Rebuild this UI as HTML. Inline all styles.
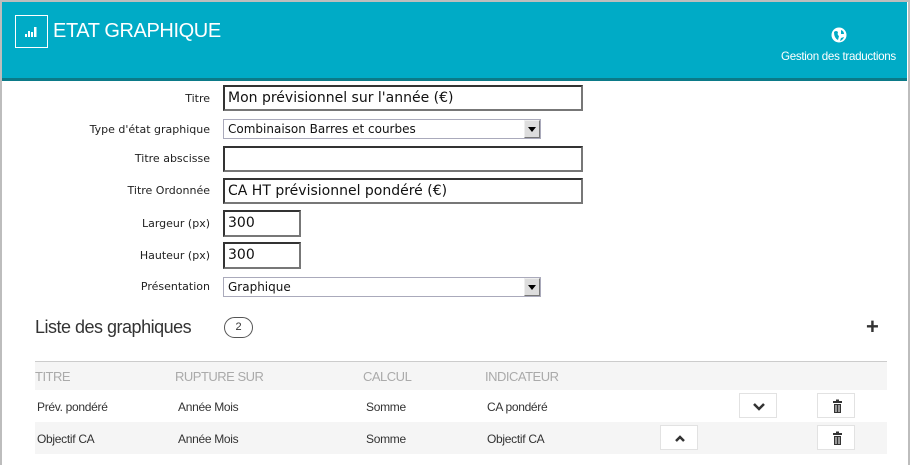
<!DOCTYPE html>
<html><head><meta charset="utf-8"><style>
*{box-sizing:border-box;margin:0;padding:0}
body{width:910px;height:465px;overflow:hidden;background:#fff;font-family:"DejaVu Sans",sans-serif;position:relative}
.frame{position:absolute;left:0;top:0;width:910px;height:465px;border:2px solid #bdbdbd;border-bottom:none}
.hdr{position:absolute;left:2px;top:2px;width:905px;height:76px;background:#00abc6}
.stripe{position:absolute;left:2px;top:78px;width:905px;height:3px;background:#0b7a88}
.logo{position:absolute;left:15px;top:15px;width:33px;height:33px;border:1.5px solid #fff}
.title{position:absolute;left:53px;top:20px;color:#fff;font-family:"Liberation Sans",sans-serif;font-size:20px;letter-spacing:-0.4px}
.gt{position:absolute;left:781px;top:50px;color:#fff;font-family:"Liberation Sans",sans-serif;font-size:11.6px;letter-spacing:-0.3px}
.lbl{position:absolute;right:700px;font-size:11px;color:#222;text-align:right;white-space:nowrap}
.inp{position:absolute;left:223px;border:2px solid #333;border-right-color:#777;border-bottom-color:#777;font-size:14px;padding:1px 3px;color:#111;line-height:20px}
.sel{position:absolute;left:223px;width:318px;height:20px;border:1px solid #aab;background:#fff;font-size:12px;padding:0 4px;line-height:18px;color:#111}
.sel .b{position:absolute;right:0;top:0;width:16px;height:18px;background:#ddd;border:1px solid #777;border-top-color:#eee;border-left-color:#eee}
.sel .b:after{content:"";position:absolute;left:3px;top:6px;border-left:4px solid transparent;border-right:4px solid transparent;border-top:5px solid #000}
.h2{position:absolute;left:35px;top:317px;font-family:"Liberation Sans",sans-serif;font-size:18px;color:#333;letter-spacing:-0.5px}
.badge{position:absolute;left:224px;top:317px;width:29px;height:21px;border:1.5px solid #555;border-radius:11px;font-family:"Liberation Sans",sans-serif;font-size:11px;text-align:center;line-height:18px;color:#333}
.plus{position:absolute;left:866px;top:314px;font-family:"Liberation Sans",sans-serif;font-size:22px;font-weight:bold;color:#333}
.row{position:absolute;left:35px;width:852px}
.t{position:absolute;font-family:"Liberation Sans",sans-serif;font-size:12px;color:#333;letter-spacing:-0.3px}
.th{font-size:13px;color:#aaa;letter-spacing:-0.5px}
.btn{position:absolute;width:38px;height:25px;border:1px solid #e2e2e2;background:#fff}
</style></head><body>
<div class="frame"></div>
<div class="hdr"></div><div class="stripe"></div>
<div class="logo"><svg width="30" height="30" viewBox="0 0 30 30"><g fill="#fff"><rect x="9" y="18" width="2" height="3"/><rect x="12" y="15" width="2" height="6"/><rect x="15" y="16" width="2" height="5"/><rect x="18" y="11" width="2.5" height="10"/></g></svg></div>
<div class="title">ETAT GRAPHIQUE</div>
<svg style="position:absolute;left:831px;top:27px" width="16" height="16" viewBox="0 0 16 16"><circle cx="8" cy="8" r="7.5" fill="#fff"/><path d="M3 5 Q5 3 7 5 Q6 8 8 9 L7 13 Q3 11 3 5Z M10 3 Q13 4 13 7 L10 7Z M10 11 L13 10 Q12 13 9 14Z" fill="#00abc6"/></svg>
<div class="gt">Gestion des traductions</div>

<div class="lbl" style="top:92px">Titre</div>
<div class="inp" style="top:85px;width:360px;height:26px">Mon prévisionnel sur l'année (€)</div>
<div class="lbl" style="top:123px">Type d'état graphique</div>
<div class="sel" style="top:119px">Combinaison Barres et courbes<div class="b"></div></div>
<div class="lbl" style="top:152px">Titre abscisse</div>
<div class="inp" style="top:146px;width:360px;height:26px"></div>
<div class="lbl" style="top:184px">Titre Ordonnée</div>
<div class="inp" style="top:178px;width:360px;height:26px">CA HT prévisionnel pondéré (€)</div>
<div class="lbl" style="top:217px">Largeur (px)</div>
<div class="inp" style="top:210px;width:78px;height:27px">300</div>
<div class="lbl" style="top:249px">Hauteur (px)</div>
<div class="inp" style="top:242px;width:78px;height:27px">300</div>
<div class="lbl" style="top:280px">Présentation</div>
<div class="sel" style="top:277px">Graphique<div class="b"></div></div>

<div class="h2">Liste des graphiques</div>
<div class="badge">2</div>
<div class="plus">+</div>

<div class="row" style="top:361px;height:29px;background:#f5f5f5;border-top:1px solid #ccc">
<div class="t th" style="left:0;top:7px">TITRE</div>
<div class="t th" style="left:140px;top:7px">RUPTURE SUR</div>
<div class="t th" style="left:328px;top:7px">CALCUL</div>
<div class="t th" style="left:450px;top:7px">INDICATEUR</div>
</div>
<div class="row" style="top:390px;height:32px;background:#fff">
<div class="t" style="left:2px;top:10px">Prév. pondéré</div>
<div class="t" style="left:143px;top:10px">Année Mois</div>
<div class="t" style="left:331px;top:10px">Somme</div>
<div class="t" style="left:452px;top:10px">CA pondéré</div>
<div class="btn" style="left:704px;top:3px"><svg width="38" height="25"><path d="M14 10 L19 15 L24 10" stroke="#333" stroke-width="2.5" fill="none"/></svg></div>
<div class="btn" style="left:782px;top:3px"><svg width="38" height="25"><g fill="#333"><rect x="15" y="7" width="9" height="2"/><rect x="18" y="5.5" width="3" height="2"/><rect x="16" y="10" width="7" height="9"/></g><g fill="#fff"><rect x="17.5" y="11" width="1" height="7"/><rect x="20.5" y="11" width="1" height="7"/></g></svg></div>
</div>
<div class="row" style="top:422px;height:32px;background:#f5f5f5">
<div class="t" style="left:2px;top:10px">Objectif CA</div>
<div class="t" style="left:143px;top:10px">Année Mois</div>
<div class="t" style="left:331px;top:10px">Somme</div>
<div class="t" style="left:452px;top:10px">Objectif CA</div>
<div class="btn" style="left:625px;top:3px"><svg width="38" height="25"><path d="M15 15 L19 11 L23 15" stroke="#333" stroke-width="2.5" fill="none"/></svg></div>
<div class="btn" style="left:782px;top:3px"><svg width="38" height="25"><g fill="#333"><rect x="15" y="7" width="9" height="2"/><rect x="18" y="5.5" width="3" height="2"/><rect x="16" y="10" width="7" height="9"/></g><g fill="#fff"><rect x="17.5" y="11" width="1" height="7"/><rect x="20.5" y="11" width="1" height="7"/></g></svg></div>
</div>
</body></html>
